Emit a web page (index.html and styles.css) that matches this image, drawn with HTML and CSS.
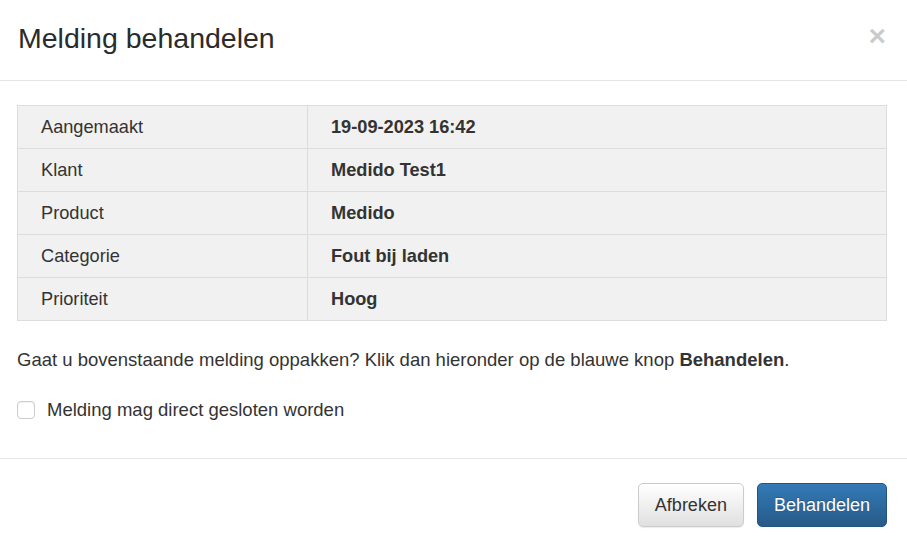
FILE: index.html
```html
<!DOCTYPE html>
<html lang="nl">
<head>
    <meta charset="UTF-8">
    <title>Melding behandelen</title>
    <link rel="stylesheet" href="styles.css">
</head>
<body>
    <div class="modal">
        <!-- kop -->
        <div class="modal-header">
            <h4 class="modal-title">Melding behandelen</h4>
            <button class="close" type="button">&times;</button>
        </div>

        <!-- inhoud -->
        <div class="modal-body">
            <table class="details">
                <tr><td class="label">Aangemaakt</td><td class="value">19-09-2023 16:42</td></tr>
                <tr><td class="label">Klant</td><td class="value">Medido Test1</td></tr>
                <tr><td class="label">Product</td><td class="value">Medido</td></tr>
                <tr><td class="label">Categorie</td><td class="value">Fout bij laden</td></tr>
                <tr><td class="label">Prioriteit</td><td class="value">Hoog</td></tr>
            </table>

            <p class="intro">Gaat u bovenstaande melding oppakken? Klik dan hieronder op de blauwe knop <strong>Behandelen</strong>.</p>

            <label class="checkbox">
                <input type="checkbox">
                <span>Melding mag direct gesloten worden</span>
            </label>
        </div>

        <!-- knoppen -->
        <div class="modal-footer">
            <button class="btn btn-default" type="button">Afbreken</button>
            <button class="btn btn-primary" type="button">Behandelen</button>
        </div>
    </div>
</body>
</html>
```

FILE: styles.css
```css
body {
    margin: 0;
    background: #fff;
    font-family: "Liberation Sans", Arial, sans-serif;
    font-size: 18.5px;
    color: #333;
}

.modal {
    width: 907px;
}

.modal-header {
    height: 80px;
    padding: 0 21px 0 18px;
    display: flex;
    align-items: center;
    justify-content: space-between;
    border-bottom: 1px solid #e5e5e5;
}

.modal-title {
    margin: 0 0 4px 0;
    font-size: 28.5px;
    font-weight: normal;
    color: #2b2b2b;
}

.close {
    background: none;
    border: none;
    padding: 0;
    margin: 0 0 8px 0;
    font-family: "Liberation Sans", Arial, sans-serif;
    font-size: 30px;
    font-weight: bold;
    color: #000;
    opacity: 0.2;
    cursor: pointer;
}

.modal-body {
    padding: 24px 20px 35px 17px;
}

.details {
    width: 870px;
    border-collapse: collapse;
    margin-bottom: 26px;
    background: #f1f1f1;
    border: 1px solid #ddd;
    font-size: 18.2px;
}

.details td {
    border: 1px solid #ddd;
    padding: 8px 23px;
    line-height: 26px;
}

.details .label {
    width: 243px;
}

.details .value {
    font-weight: bold;
}

.intro {
    margin: 0 0 24px 0;
    line-height: 26px;
}

.checkbox {
    display: flex;
    align-items: center;
    gap: 12px;
    margin-top: 12px;
    line-height: 26px;
    cursor: pointer;
}

.checkbox input {
    appearance: none;
    width: 18px;
    height: 18px;
    margin: 0;
    border: 1px solid #ccc;
    border-radius: 4px;
    background: #fff;
    box-shadow: inset 0 1px 1px rgba(0, 0, 0, 0.05);
}

.modal-footer {
    padding: 24px 20px 18px;
    border-top: 1px solid #e5e5e5;
    display: flex;
    justify-content: flex-end;
    gap: 13px;
}

.btn {
    height: 44px;
    padding: 0 16px;
    font-family: "Liberation Sans", Arial, sans-serif;
    font-size: 18px;
    border-radius: 5px;
    cursor: pointer;
}

.btn-default {
    color: #333;
    background: linear-gradient(#fff, #e0e0e0);
    border: 1px solid #ccc;
    box-shadow: 0 1px 1px rgba(0, 0, 0, 0.08);
}

.btn-primary {
    color: #fff;
    background: linear-gradient(#337ab7, #265a88);
    border: 1px solid #245580;
    text-shadow: 0 -1px 0 rgba(0, 0, 0, 0.2);
}
```
